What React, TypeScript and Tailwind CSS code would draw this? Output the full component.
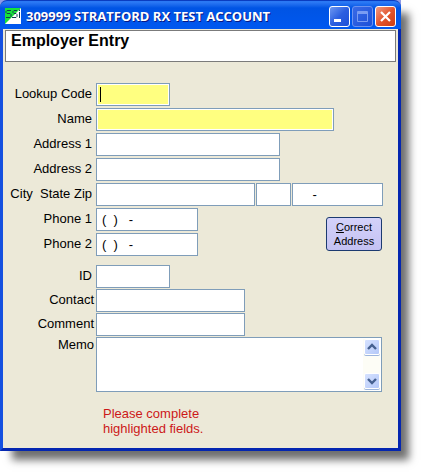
import React, { useState } from 'react';

interface TextRowProps {
    id: string;
    label: string;
    width: string;
    required?: boolean;
    value?: string;
    autoFocus?: boolean;
    wideLabel?: boolean;
}

const boxClass = 'relative h-[23px] border border-[#7f9db9] p-px';
const innerClass = 'block h-full w-full px-1 text-[13px] outline-none';

// Single bordered text box
const TextBox: React.FC<Omit<TextRowProps, 'label' | 'wideLabel'> & { ariaLabel?: string }> = ({
    id,
    width,
    required,
    value = '',
    autoFocus,
    ariaLabel,
}) => {
    const [text, setText] = useState<string>(value);

    return (
        <div className={`${boxClass} ${width} bg-white`}>
            <input
                id={id}
                type="text"
                aria-label={ariaLabel}
                value={text}
                autoFocus={autoFocus}
                onChange={(e) => setText(e.target.value)}
                className={`${innerClass} ${required ? 'bg-[#ffff80]' : 'bg-white'}`}
            />
            {/* Steady caret while the box is empty */}
            {autoFocus && !text && (
                <span className="pointer-events-none absolute top-[3px] left-[3px] h-[15px] w-px bg-black" />
            )}
        </div>
    );
};

const Label: React.FC<{ htmlFor: string; wide?: boolean; children: React.ReactNode }> = ({
    htmlFor,
    wide,
    children,
}) => (
    <label
        htmlFor={htmlFor}
        className={`w-[93px] shrink-0 text-right leading-[22px] whitespace-pre ${wide ? 'pr-[2px]' : 'pr-1'}`}
    >
        {children}
    </label>
);

const TextRow: React.FC<TextRowProps> = ({ label, wideLabel, ...box }) => (
    <div className="flex">
        <Label htmlFor={box.id} wide={wideLabel}>
            {label}
        </Label>
        <TextBox {...box} />
    </div>
);

const captionButton = 'flex size-[21px] items-center justify-center rounded-[3px] border';

const TitleBar: React.FC = () => (
    <header className="flex h-[29px] items-center rounded-t-[7px] border-t border-[#0a3cc0] bg-linear-to-b from-[#2a78f4] from-5% via-[#0054e4] via-25% to-[#0058f0] pt-[2px] pr-[5px] pl-[5px]">
        {/* Application logo */}
        <svg className="size-4 shrink-0" viewBox="0 0 16 16" aria-hidden="true">
            <rect width="16" height="16" fill="#fff" />
            <path d="M0 0H16L0 16Z" fill="#16e23a" />
            <g fill="none" stroke="#123c50" strokeWidth="1">
                <path d="M6 2.5H2L1 3.5V4.5L2 5.5H5L6 6.5V8.5L5 9.5H1" />
                <path d="M12 2.5H9L8 3.5V4.5L9 5.5H11L12 6.5V8.5L11 9.5H7" />
                <path d="M14.5 4V10M14.5 1.5V3" />
            </g>
        </svg>
        <h1 className="ml-[5px] grow font-['Open_Sans','Noto_Sans',sans-serif] text-[13px] leading-5 font-bold whitespace-nowrap text-white [text-shadow:1px_1px_0_#0a1883]">
            309999 STRATFORD RX TEST ACCOUNT
        </h1>
        <div className="flex gap-[2px]">
            <button
                type="button"
                aria-label="Minimize"
                className={`${captionButton} border-white bg-linear-to-br from-[#6f97f0] via-[#2c5fe0] to-[#1d50d8]`}
            >
                <svg className="size-[19px]" viewBox="0 0 19 19" aria-hidden="true">
                    <rect x="4" y="12" width="7" height="3" fill="#fff" />
                </svg>
            </button>
            <button
                type="button"
                aria-label="Maximize"
                disabled
                className={`${captionButton} border-[#6c93f0] bg-linear-to-br from-[#3a6ae6] to-[#1c50d8]`}
            >
                <svg className="size-[19px]" viewBox="0 0 19 19" aria-hidden="true">
                    <path d="M4.5 4.5H14.5V14.5H4.5ZM4 5.5H15M4 6.5H15" fill="none" stroke="#7a9cf2" />
                </svg>
            </button>
            <button
                type="button"
                aria-label="Close"
                className={`${captionButton} border-white bg-linear-to-br from-[#f09a80] via-[#e2552c] to-[#cc3c12]`}
            >
                <svg className="size-[19px]" viewBox="0 0 19 19" aria-hidden="true">
                    <path d="M5 5L14 14M14 5L5 14" stroke="#fff" strokeWidth="2.2" />
                </svg>
            </button>
        </div>
    </header>
);

const ScrollButton: React.FC<{ label: string; path: string }> = ({ label, path }) => (
    <button
        type="button"
        aria-label={label}
        className="flex size-4 items-center justify-center rounded-[2px] border border-white bg-linear-to-br from-[#d6e2ff] to-[#b4c8f8] shadow-[0_1px_0_#9db5dd]"
    >
        <svg className="size-[14px]" viewBox="0 0 14 14" aria-hidden="true">
            <path d={path} fill="none" stroke="#45608f" strokeWidth="2.4" />
        </svg>
    </button>
);

const App: React.FC = () => {
    const [memo, setMemo] = useState<string>('');

    return (
        <div className="bg-white pr-[21px] pb-[21px] font-['Liberation_Sans',Arial,sans-serif] text-[13px] text-black">
            <main className="bg-[#8f9ae6] shadow-[10px_11px_8px_-2px_#707070]">
                <TitleBar />
                <div className="border-r-[3px] border-b-[3px] border-l-[3px] border-r-[#0426b0] border-b-[#0426b0] border-l-[#1550e0]">
                    <form onSubmit={(e) => e.preventDefault()} className="bg-[#ece9d8] pt-px pb-3">
                        <div className="mx-[2px] h-8 border border-[#7b7b7b] bg-white px-[5px]">
                            <h2 className="text-[16px] leading-5 font-bold">Employer Entry</h2>
                        </div>

                        <div className="mt-[21px] flex flex-col gap-[2px]">
                            <TextRow id="lookup" label="Lookup Code" width="w-[74px]" required autoFocus />
                            <TextRow id="name" label="Name" width="w-[238px]" required />
                            <TextRow id="address1" label="Address 1" width="w-[184px]" />
                            <TextRow id="address2" label="Address 2" width="w-[184px]" />
                            <div className="flex">
                                <Label htmlFor="city">{'City  State Zip'}</Label>
                                <div className="flex gap-px">
                                    <TextBox id="city" width="w-[159px]" />
                                    <TextBox id="state" ariaLabel="State" width="w-[35px]" />
                                    <TextBox id="zip" ariaLabel="Zip" width="w-[91px]" value="    -" />
                                </div>
                            </div>
                            <div className="flex items-start justify-between">
                                <div className="flex flex-col gap-[2px]">
                                    <TextRow id="phone1" label="Phone 1" width="w-[102px]" value="(  )   -" />
                                    <TextRow id="phone2" label="Phone 2" width="w-[102px]" value="(  )   -" />
                                </div>
                                <button
                                    type="button"
                                    className="mt-[9px] mr-4 h-[34px] w-[56px] rounded-[3px] border border-[#1c3a70] bg-linear-to-b from-[#d4d2fa] to-[#c4c2f2] text-[11px] leading-[14px]"
                                >
                                    <span className="underline">C</span>orrect
                                    <br />
                                    Address
                                </button>
                            </div>
                        </div>

                        <div className="mt-[9px] flex flex-col gap-px">
                            <TextRow id="employerId" label="ID" width="w-[74px]" />
                            <TextRow id="contact" label="Contact" width="w-[149px]" wideLabel />
                            <TextRow id="comment" label="Comment" width="w-[149px]" wideLabel />
                            <div className="flex">
                                <label htmlFor="memo" className="w-[93px] shrink-0 pr-[2px] text-right leading-4">
                                    Memo
                                </label>
                                <div className="mr-4 flex h-[55px] grow border border-[#7f9db9] bg-white p-px">
                                    <textarea
                                        id="memo"
                                        value={memo}
                                        onChange={(e) => setMemo(e.target.value)}
                                        className="h-full min-w-0 grow resize-none px-1 outline-none"
                                    />
                                    <div className="flex w-[17px] flex-col items-center justify-between bg-[#fdfdf6] pb-px">
                                        <ScrollButton label="Scroll up" path="M3 9L7 5L11 9" />
                                        <ScrollButton label="Scroll down" path="M3 5L7 9L11 5" />
                                    </div>
                                </div>
                            </div>
                        </div>

                        {/* Hint about required fields */}
                        <p className="mt-[14px] ml-[100px] leading-[15px] text-[#cc1818]">
                            Please complete
                            <br />
                            highlighted fields.
                        </p>
                    </form>
                </div>
            </main>
        </div>
    );
};

export default App;
